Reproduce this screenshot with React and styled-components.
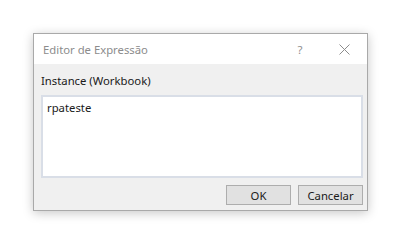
import React from "react";
import styled, { createGlobalStyle } from "styled-components";

const Global = createGlobalStyle`
  html, body { margin: 0; padding: 0; background: #ffffff; }
  body { font-family: "Noto Sans", "Open Sans", sans-serif; }
`;

const Page = styled.div`
  width: 411px;
  height: 247px;
  padding: 33px 0 0 33px;
  box-sizing: border-box;
`;

const Dialog = styled.div`
  width: 335px;
  height: 178px;
  box-sizing: border-box;
  border: 1px solid #a9a9a9;
  background: #f0f0f0;
  box-shadow: 0 2px 10px rgba(0, 0, 0, 0.22);
  display: flex;
  flex-direction: column;
`;

const TitleBar = styled.div`
  height: 30px;
  background: #ffffff;
  display: flex;
  align-items: center;
  padding-left: 9px;
`;

const Title = styled.div`
  flex: 1;
  font-size: 11.3px;
  color: #8c8c8c;
  white-space: nowrap;
`;

const CaptionButton = styled.div`
  width: ${(p) => p.$w || 46}px;
  height: 30px;
  display: flex;
  align-items: center;
  justify-content: center;
  color: #909090;
  font-size: 11.5px;
`;

const Body = styled.div`
  flex: 1;
  display: flex;
  flex-direction: column;
  padding: 9px 4px 0 7px;
`;

const Label = styled.div`
  font-size: 11.3px;
  line-height: 16px;
  color: #1a1a1a;
  margin-bottom: 6px;
  white-space: nowrap;
`;

const TextBox = styled.div`
  height: 83px;
  box-sizing: border-box;
  border: 2px solid #d9dee7;
  background: #ffffff;
  padding: 3px 3px 3px 4px;
  font-size: 11.3px;
  line-height: 16px;
  color: #1a1a1a;
`;

const Buttons = styled.div`
  display: flex;
  justify-content: flex-end;
  gap: 7px;
  margin-top: 7px;
`;

const Button = styled.div`
  width: 65px;
  height: 20px;
  box-sizing: border-box;
  border: 1px solid #adadad;
  background: #e1e1e1;
  font-size: 11.3px;
  color: #1a1a1a;
  display: flex;
  align-items: center;
  justify-content: center;
`;

export default function App() {
  return (
    <>
      <Global />
      <Page>
        <Dialog>
          <TitleBar>
            <Title>Editor de Expressão</Title>
            <CaptionButton $w={42}>?</CaptionButton>
            <CaptionButton $w={46}>
              <svg width="11" height="11" viewBox="0 0 11 11">
                <path d="M0.5 0.5 L10.5 10.5 M10.5 0.5 L0.5 10.5" stroke="#8c8c8c" strokeWidth="1" fill="none" />
              </svg>
            </CaptionButton>
          </TitleBar>
          <Body>
            <Label>Instance (Workbook)</Label>
            <TextBox>rpateste</TextBox>
            <Buttons>
              <Button>OK</Button>
              <Button>Cancelar</Button>
            </Buttons>
          </Body>
        </Dialog>
      </Page>
    </>
  );
}
